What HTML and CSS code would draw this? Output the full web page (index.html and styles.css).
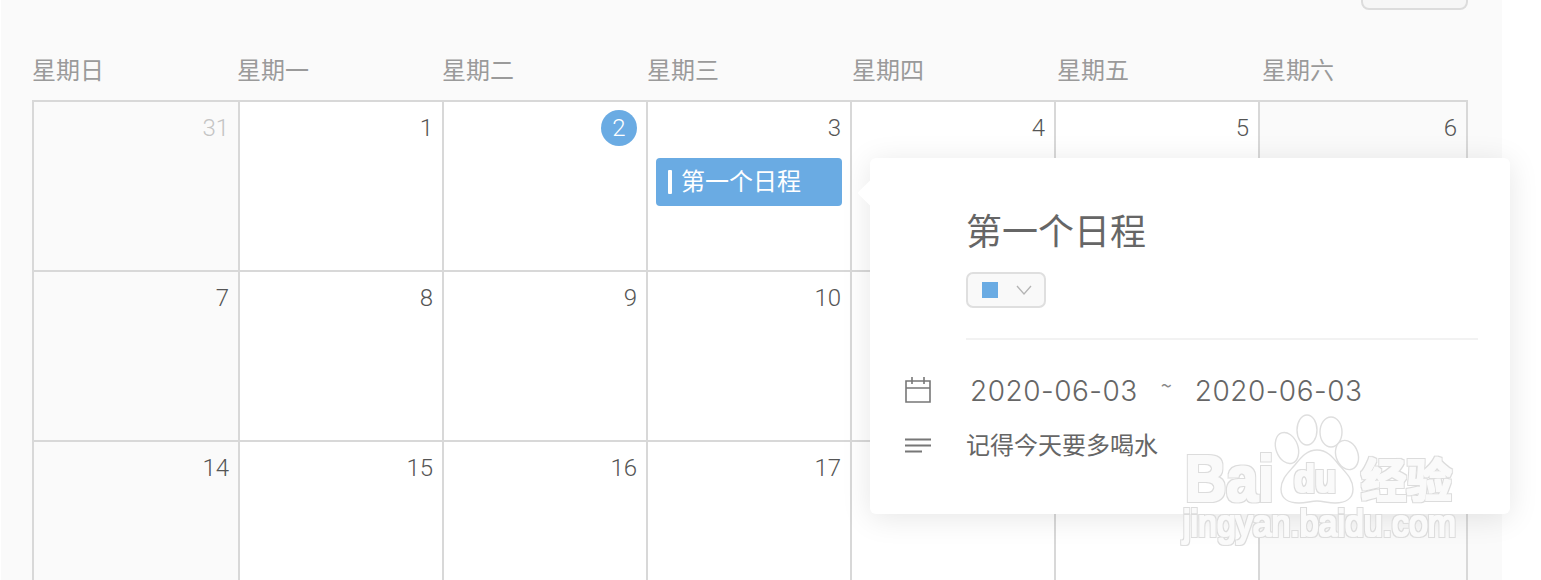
FILE: index.html
```html
<!DOCTYPE html>
<html lang="zh-CN">
<head>
<meta charset="utf-8">
<title>日历</title>
<link rel="stylesheet" href="styles.css">
</head>
<body>
<main class="app">
  <div class="toolbar"><button class="today-btn"></button></div>
  <div class="weekdays">
    <span>星期日</span><span>星期一</span><span>星期二</span><span>星期三</span><span>星期四</span><span>星期五</span><span>星期六</span>
  </div>
  <div class="grid">
    <div class="cell weekend other"><span class="num">31</span></div>
    <div class="cell"><span class="num">1</span></div>
    <div class="cell"><span class="num today">2</span></div>
    <div class="cell"><span class="num">3</span><div class="event"><i class="event-bar"></i><span class="event-text">第一个日程</span></div></div>
    <div class="cell"><span class="num">4</span></div>
    <div class="cell"><span class="num">5</span></div>
    <div class="cell weekend"><span class="num">6</span></div>

    <div class="cell weekend"><span class="num">7</span></div>
    <div class="cell"><span class="num">8</span></div>
    <div class="cell"><span class="num">9</span></div>
    <div class="cell"><span class="num">10</span></div>
    <div class="cell"><span class="num">11</span></div>
    <div class="cell"><span class="num">12</span></div>
    <div class="cell weekend"><span class="num">13</span></div>

    <div class="cell weekend"><span class="num">14</span></div>
    <div class="cell"><span class="num">15</span></div>
    <div class="cell"><span class="num">16</span></div>
    <div class="cell"><span class="num">17</span></div>
    <div class="cell"><span class="num">18</span></div>
    <div class="cell"><span class="num">19</span></div>
    <div class="cell weekend"><span class="num">20</span></div>
  </div>
</main>

<section class="popover">
  <i class="arrow"></i>
  <h2 class="pop-title">第一个日程</h2>
  <div class="color-select">
    <i class="swatch"></i>
    <svg class="chevron" width="16" height="10" viewBox="0 0 16 10"><path d="M1 1l7 8 7-8" fill="none" stroke="#b4b4b4" stroke-width="1.3"/></svg>
  </div>
  <hr class="divider">
  <div class="row date-row">
    <svg class="row-icon" width="26" height="26" viewBox="0 0 26 26"><path d="M1 4h24v21H1zM1 11h24M7 0v7M19 0v7" fill="none" stroke="#777" stroke-width="1.6"/></svg>
    <span class="date">2020-06-03</span><span class="tilde">~</span><span class="date">2020-06-03</span>
  </div>
  <div class="row desc-row">
    <svg class="row-icon" width="26" height="16" viewBox="0 0 26 16"><path d="M0 1.5h26M0 7.5h26M0 13.5h17" fill="none" stroke="#777" stroke-width="2"/></svg>
    <span class="desc">记得今天要多喝水</span>
  </div>
</section>

<svg class="watermark" width="320" height="150" viewBox="0 0 320 150">
  <defs>
    <filter id="outline" x="-5%" y="-10%" width="110%" height="120%">
      <feMorphology in="SourceAlpha" operator="dilate" radius="1" result="inner"/>
      <feMorphology in="SourceAlpha" operator="dilate" radius="2" result="outer"/>
      <feFlood flood-color="#dcdcdc"/>
      <feComposite in2="outer" operator="in" result="edge"/>
      <feFlood flood-color="#ffffff" flood-opacity="0.85"/>
      <feComposite in2="inner" operator="in" result="body"/>
      <feMerge><feMergeNode in="edge"/><feMergeNode in="body"/></feMerge>
    </filter>
  </defs>
  <g class="paw">
    <ellipse cx="107" cy="36" rx="11" ry="16" transform="rotate(-20 107 36)"/>
    <ellipse cx="127" cy="18" rx="10" ry="15"/>
    <ellipse cx="151" cy="20" rx="11" ry="15"/>
    <ellipse cx="167" cy="43" rx="11" ry="15" transform="rotate(-20 167 43)"/>
    <path d="M137 38c-11 0-17 9-23 16-6 7-13 13-13 23 0 10 8 14 18 14 7 0 12-2 18-2s11 2 18 2c10 0 18-4 18-14 0-10-7-16-13-23-6-7-12-16-23-16z"/>
  </g>
  <g class="wm-text" filter="url(#outline)">
    <text class="wm-big" x="5" y="89" textLength="89" lengthAdjust="spacingAndGlyphs">Bai</text>
    <text class="wm-du" x="114" y="80" textLength="42" lengthAdjust="spacingAndGlyphs">du</text>
    <text class="wm-cn" x="181" y="85" textLength="91" lengthAdjust="spacingAndGlyphs">经验</text>
    <text class="wm-url" x="3" y="124" textLength="273" lengthAdjust="spacingAndGlyphs">jingyan.baidu.com</text>
  </g>
</svg>
</body>
</html>
```
FILE: styles.css
```css
* { box-sizing: border-box; }
html, body {
  margin: 0;
  height: 580px;
  overflow: hidden;
  background: #fff;
}
body {
  position: relative;
  font-family: "Noto Sans CJK SC", "Liberation Sans", sans-serif;
}
.app {
  width: 1502px;
  height: 580px;
  padding-left: 31px;
  border-left: 1px solid #fff;
  background: #fafafa;
  overflow: hidden;
}
.toolbar {
  height: 10px;
  width: 1436px;
  display: flex;
  justify-content: flex-end;
  align-items: flex-end;
}
.today-btn {
  flex: none;
  width: 107px;
  height: 40px;
  padding: 0;
  background: #f6f6f6;
  border: 2px solid #dcdcdc;
  border-radius: 8px;
}
.weekdays {
  display: flex;
  height: 90px;
  padding-top: 41px;
  font-size: 24px;
  line-height: 36px;
  color: #9a9a9a;
}
.weekdays span { width: 205px; flex: none; }
.grid {
  display: grid;
  width: 1436px;
  grid-template-columns: 206px repeat(5, 204px) 210px;
  grid-auto-rows: 170px;
}
.cell {
  border-left: 2px solid #d8d8d8;
  border-top: 2px solid #d8d8d8;
  background: #fff;
  padding: 8px 9px 0 8px;
  display: flex;
  flex-direction: column;
  align-items: flex-end;
}
.cell:nth-child(7n) { border-right: 2px solid #d8d8d8; }
.cell.weekend { background: #fafafa; }
.num {
  font-family: "Roboto", "Liberation Sans", sans-serif;
  font-weight: 300;
  font-size: 24px;
  line-height: 36px;
  height: 36px;
  color: #555;
}
.other .num { color: #c4c4c4; }
.num.today {
  width: 36px;
  border-radius: 50%;
  background: #6aabe3;
  color: #fff;
  text-align: center;
}
.event {
  margin: 12px -1px 0 0;
  align-self: stretch;
  height: 48px;
  display: flex;
  align-items: center;
  gap: 9px;
  padding-left: 12px;
  border-radius: 4px;
  background: #6aabe3;
  color: #fff;
  font-size: 24px;
}
.event-bar {
  width: 4px;
  height: 24px;
  border-radius: 1px;
  background: #fff;
}
.event-text { padding-bottom: 6px; }
.popover {
  position: absolute;
  left: 870px;
  top: 158px;
  width: 640px;
  height: 356px;
  padding: 47px 32px 0 96px;
  background: #fff;
  border-radius: 6px;
  box-shadow: 0 4px 30px rgba(0, 0, 0, 0.1);
}
.arrow {
  position: absolute;
  left: -8px;
  top: 24px;
  width: 22px;
  height: 22px;
  background: #fff;
  transform: rotate(45deg);
}
.pop-title {
  position: relative;
  margin: 0;
  font-size: 36px;
  font-weight: 400;
  line-height: 48px;
  color: #666;
}
.color-select {
  width: 80px;
  height: 36px;
  margin-top: 19px;
  display: flex;
  align-items: center;
  gap: 18px;
  padding-left: 14px;
  border: 2px solid #dfdfdf;
  border-radius: 7px;
  background: #f9f9f9;
}
.swatch {
  width: 16px;
  height: 16px;
  background: #6aabe3;
}
.divider {
  height: 2px;
  margin: 30px 0 0;
  border: 0;
  background: #f2f2f2;
}
.row {
  display: flex;
  align-items: center;
  margin-left: -61px;
  color: #666;
}
.date-row { margin-top: 36px; height: 28px; }
.desc-row { margin-top: 28px; height: 28px; }
.date-row .row-icon { flex: none; margin-right: 39px; }
.desc-row .row-icon { flex: none; margin-right: 35px; }
.date {
  font-family: "Inter", "Liberation Sans", sans-serif;
  font-weight: 300;
  font-size: 28px;
  line-height: 28px;
  letter-spacing: 0.5px;
  margin-top: 2px;
}
.tilde {
  width: 57px;
  text-align: center;
  font-size: 20px;
  line-height: 20px;
  margin-top: -10px;
  color: #888;
}
.desc { font-size: 24px; line-height: 28px; padding-bottom: 4px; }
.watermark {
  position: absolute;
  left: 1180px;
  top: 412px;
  pointer-events: none;
}
.paw > * {
  fill: rgba(255, 255, 255, 0.75);
  stroke: #dedede;
  stroke-width: 1.4;
}
.wm-big { font: 700 65px "Liberation Sans", sans-serif; }
.wm-du { font: 700 38px "Liberation Sans", sans-serif; }
.wm-cn { font: 700 46px "Noto Sans CJK SC", sans-serif; }
.wm-url { font: 400 37px "Liberation Sans", sans-serif; }
```
